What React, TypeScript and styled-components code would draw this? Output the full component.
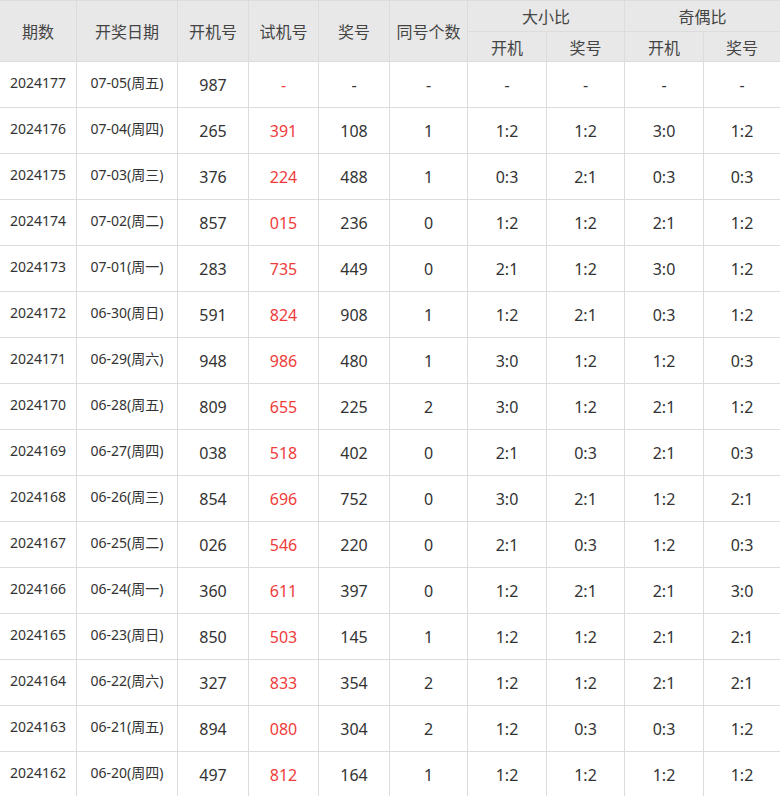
import React from 'react';
import styled, { createGlobalStyle } from 'styled-components';

const GlobalStyle = createGlobalStyle`
  html, body {
    margin: 0;
    padding: 0;
    background: #fff;
  }
  body {
    font-family: "Noto Sans", "Noto Sans CJK SC", sans-serif;
    color: #333;
  }
`;

type Row = {
  period: string;
  date: string;
  open: string;
  trial: string;
  prize: string;
  same: string;
  bigOpen: string;
  bigPrize: string;
  oddOpen: string;
  oddPrize: string;
};

const raw = `2024177 07-05(周五) 987 - - - - - - -
2024176 07-04(周四) 265 391 108 1 1:2 1:2 3:0 1:2
2024175 07-03(周三) 376 224 488 1 0:3 2:1 0:3 0:3
2024174 07-02(周二) 857 015 236 0 1:2 1:2 2:1 1:2
2024173 07-01(周一) 283 735 449 0 2:1 1:2 3:0 1:2
2024172 06-30(周日) 591 824 908 1 1:2 2:1 0:3 1:2
2024171 06-29(周六) 948 986 480 1 3:0 1:2 1:2 0:3
2024170 06-28(周五) 809 655 225 2 3:0 1:2 2:1 1:2
2024169 06-27(周四) 038 518 402 0 2:1 0:3 2:1 0:3
2024168 06-26(周三) 854 696 752 0 3:0 2:1 1:2 2:1
2024167 06-25(周二) 026 546 220 0 2:1 0:3 1:2 0:3
2024166 06-24(周一) 360 611 397 0 1:2 2:1 2:1 3:0
2024165 06-23(周日) 850 503 145 1 1:2 1:2 2:1 2:1
2024164 06-22(周六) 327 833 354 2 1:2 1:2 2:1 2:1
2024163 06-21(周五) 894 080 304 2 1:2 0:3 0:3 1:2
2024162 06-20(周四) 497 812 164 1 1:2 1:2 1:2 1:2`;

const rows: Row[] = raw.split('\n').map((line) => {
  const [period, date, open, trial, prize, same, bigOpen, bigPrize, oddOpen, oddPrize] = line.split(' ');
  return { period, date, open, trial, prize, same, bigOpen, bigPrize, oddOpen, oddPrize };
});

const widths = [77, 101, 71, 70, 71, 78, 79, 78, 79, 76];

const Table = styled.table`
  width: 780px;
  table-layout: fixed;
  border-collapse: separate;
  border-spacing: 0;
  border-top: 1px solid #dcdcdc;
  text-align: center;
`;

const Th = styled.th<{ $h: number }>`
  box-sizing: border-box;
  height: ${(p) => p.$h}px;
  padding: 2px 0 0;
  background: #e8e8e8;
  color: #444;
  font-size: 16px;
  font-weight: normal;
  line-height: 20px;
  border-right: 1px solid #dcdcdc;
  border-bottom: 1px solid #dcdcdc;
  &.last {
    border-right: none;
  }
`;

const Td = styled.td<{ $small?: boolean; $red?: boolean }>`
  box-sizing: border-box;
  height: 46px;
  padding: ${(p) => (p.$small ? '0 0 3px' : '1px 0 0')};
  font-size: ${(p) => (p.$small ? '14px' : '16px')};
  line-height: 20px;
  color: ${(p) => (p.$red ? '#ef3b3b' : '#333')};
  border-right: 1px solid #dcdcdc;
  border-bottom: 1px solid #dcdcdc;
  white-space: nowrap;
  &:last-child {
    border-right: none;
  }
`;

export default function App() {
  return (
    <>
      <GlobalStyle />
      <Table>
        <colgroup>
          {widths.map((w, i) => (
            <col key={i} style={{ width: w }} />
          ))}
        </colgroup>
        <thead>
          <tr>
            <Th $h={61} rowSpan={2}>期数</Th>
            <Th $h={61} rowSpan={2}>开奖日期</Th>
            <Th $h={61} rowSpan={2}>开机号</Th>
            <Th $h={61} rowSpan={2}>试机号</Th>
            <Th $h={61} rowSpan={2}>奖号</Th>
            <Th $h={61} rowSpan={2}>同号个数</Th>
            <Th $h={31} colSpan={2}>大小比</Th>
            <Th $h={31} colSpan={2} className="last">奇偶比</Th>
          </tr>
          <tr>
            <Th $h={30}>开机</Th>
            <Th $h={30}>奖号</Th>
            <Th $h={30}>开机</Th>
            <Th $h={30} className="last">奖号</Th>
          </tr>
        </thead>
        <tbody>
          {rows.map((r) => (
            <tr key={r.period}>
              <Td $small>{r.period}</Td>
              <Td $small>{r.date}</Td>
              <Td>{r.open}</Td>
              <Td $red>{r.trial}</Td>
              <Td>{r.prize}</Td>
              <Td>{r.same}</Td>
              <Td>{r.bigOpen}</Td>
              <Td>{r.bigPrize}</Td>
              <Td>{r.oddOpen}</Td>
              <Td>{r.oddPrize}</Td>
            </tr>
          ))}
        </tbody>
      </Table>
    </>
  );
}
